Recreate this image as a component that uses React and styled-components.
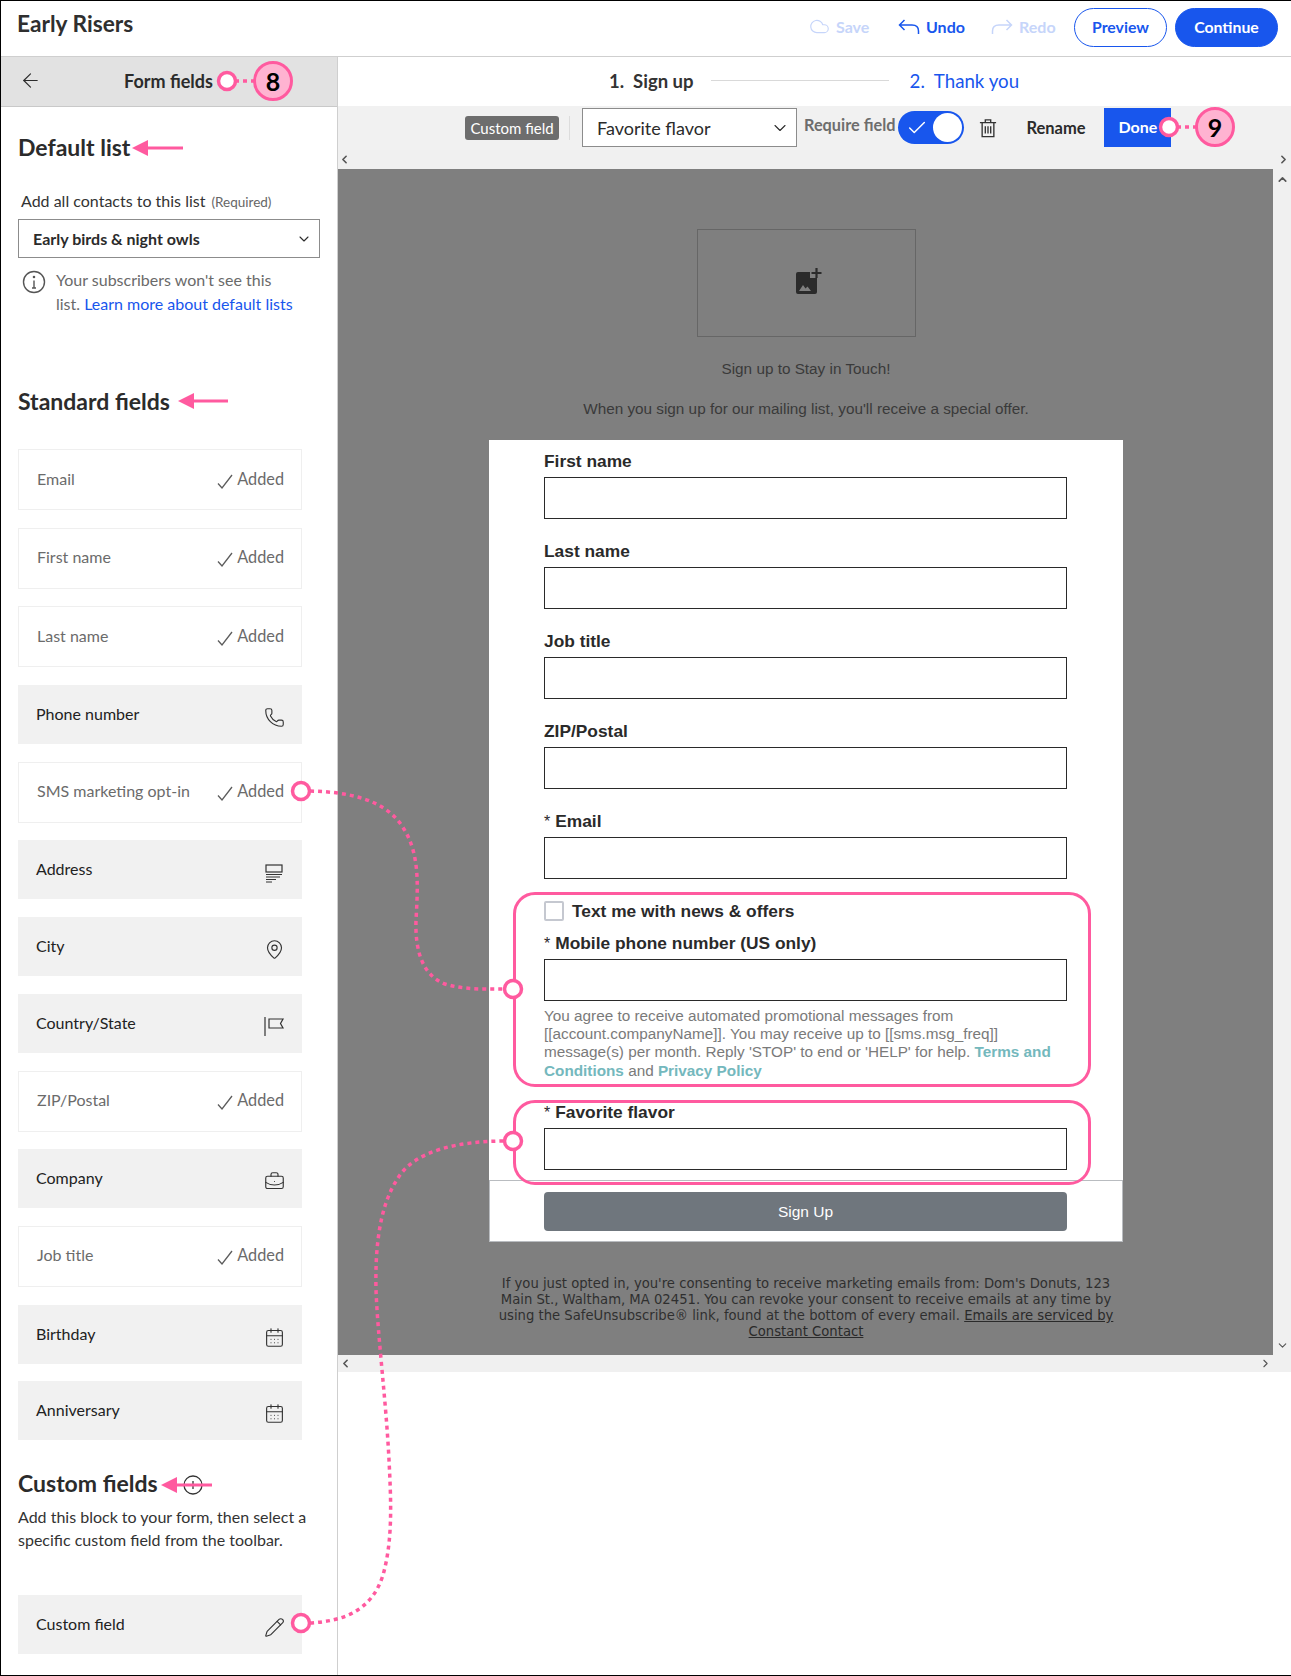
import styled, { createGlobalStyle } from "styled-components";
import { Phone, MapPin, BriefcaseBusiness, CalendarDays, Pencil, ChevronDown, ChevronLeft, ChevronRight, ChevronUp, Check, Cloud, ArrowLeft } from "lucide-react";

const BLUE = "#1856ed";
const PINK = "#ff5a9f";
const UI_FONT = `Lato, "Noto Sans", sans-serif`;
const FORM_FONT = `"Liberation Sans", Arial, sans-serif`;

const Global = createGlobalStyle`
  html, body { margin: 0; padding: 0; background: #fff; }
  * { box-sizing: border-box; }
`;

const Page = styled.div`
  position: relative;
  width: 1291px;
  height: 1676px;
  border: 1px solid #000;
  border-right-width: 0;
  background: #fff;
  font-family: ${UI_FONT};
  color: #2b2b2b;
  overflow: hidden;
`;

const Header = styled.header`
  height: 56px;
  border-bottom: 1px solid #cfcfcf;
  display: flex;
  align-items: center;
  padding: 0 13px 2px 16px;
`;

const Title = styled.h1`
  margin: 0 auto 8px 0;
  font-size: 22.7px;
  font-weight: 700;
  color: #2f2f2f;
`;

const HeaderAction = styled.span`
  display: flex;
  align-items: center;
  gap: 6px;
  width: ${(p) => p.$w}px;
  margin-top: -2px;
  font-size: 16px;
  font-weight: 700;
  color: ${(p) => (p.$off ? "#c6d5fa" : BLUE)};
`;

const PillButton = styled.button`
  height: 39px;
  width: ${(p) => p.$w}px;
  margin-left: ${(p) => p.$ml}px;
  padding: 0 0 2px;
  border-radius: 20px;
  border: 1px solid ${BLUE};
  background: ${(p) => (p.$solid ? BLUE : "#fff")};
  color: ${(p) => (p.$solid ? "#fff" : BLUE)};
  font: 700 15.8px ${UI_FONT};
`;

const Body = styled.div`
  display: flex;
  height: 1619px;
`;

const Sidebar = styled.aside`
  width: 337px;
  flex: none;
  border-right: 1px solid #cfcfcf;
`;

const SideHead = styled.div`
  height: 50px;
  background: #e2e2e2;
  border-bottom: 1px solid #c9c9c9;
  display: flex;
  align-items: center;
  padding: 0 0 2px 18px;
  font-size: 18px;
  font-weight: 700;
  color: #2b2b2b;
`;

const SideTitle = styled.span`
  margin-left: 82px;
`;

const SideBody = styled.div`
  padding: 28px 17px 0 17px;
`;

const Heading = styled.h2`
  margin: ${(p) => p.$mt || 0}px 0 0 0;
  padding-bottom: 3px;
  font-size: 23px;
  line-height: 25px;
  font-weight: 700;
  color: #2b2b2b;
`;

const ListLabel = styled.div`
  margin: 28px 0 0 3px;
  font-size: 16px;
  line-height: 20px;
  color: #333;
  small {
    margin-left: 6px;
    font-size: 13.5px;
    color: #666;
  }
`;

const ListSelect = styled.div`
  margin-top: 7px;
  width: 302px;
  height: 39px;
  border: 1px solid #8c8c8c;
  display: flex;
  align-items: center;
  justify-content: space-between;
  padding: 0 7px 0 14px;
  font-size: 16px;
  font-weight: 700;
  color: #2b2b2b;
`;

const Hint = styled.div`
  display: flex;
  gap: 10px;
  margin: 10px 0 0 4px;
  font-size: 16px;
  line-height: 24px;
  color: #6a6a6a;
  svg {
    flex: none;
    margin-top: 2px;
  }
  span {
    width: 240px;
  }
  a {
    color: ${BLUE};
  }
`;

const FieldList = styled.div`
  margin-top: ${(p) => p.$mt}px;
  width: 284px;
  display: flex;
  flex-direction: column;
  gap: 17.7px;
`;

const FieldRow = styled.div`
  height: ${(p) => (p.$added ? 61 : 59)}px;
  display: flex;
  justify-content: space-between;
  align-items: ${(p) => (p.$added ? "center" : "flex-start")};
  padding: ${(p) => (p.$added ? "0 17px 2px 18px" : "19px 17px 0 18px")};
  background: ${(p) => (p.$added ? "#fff" : "#f1f1f1")};
  border: ${(p) => (p.$added ? "1px solid #efefef" : "0")};
  color: ${(p) => (p.$added ? "#6b6b6b" : "#222")};
  font-size: 16px;
  line-height: 20px;
  svg {
    margin-top: ${(p) => (p.$added ? 0 : 3)}px;
  }
`;

const AddedMark = styled.span`
  display: flex;
  align-items: center;
  gap: 4px;
  font-size: 16.3px;
  svg {
    margin-top: 5px;
  }
`;

const CustomText = styled.p`
  margin: 6px 0 0 0;
  font-size: 16px;
  line-height: 23px;
  color: #333;
  width: 302px;
`;

const Main = styled.main`
  flex: 1;
  min-width: 0;
`;

const Steps = styled.div`
  height: 49px;
  display: flex;
  align-items: center;
  padding: 0 0 2px 271px;
  font-size: 18.7px;
`;

const StepCurrent = styled.span`
  font-size: 18.5px;
  font-weight: 700;
  color: #333;
`;

const StepLine = styled.span`
  width: 178px;
  height: 1px;
  margin: 0 21px 0 17px;
  background: #d9d9d9;
`;

const StepNext = styled.span`
  color: ${BLUE};
`;

const Toolbar = styled.div`
  height: 44px;
  background: #f1f1f1;
  display: flex;
  align-items: center;
  padding: 0 0 1px 127px;
`;

const TypeTag = styled.span`
  width: 94px;
  height: 24px;
  border-radius: 3px;
  background: #6d6d6d;
  color: #fff;
  font-size: 15px;
  line-height: 24px;
  text-align: center;
`;

const ToolDivider = styled.span`
  width: 1px;
  height: 24px;
  margin: 0 12px 0 10px;
  background: #dcdcdc;
`;

const FieldPicker = styled.div`
  width: 215px;
  height: 39px;
  background: #fff;
  border: 1px solid #8c8c8c;
  display: flex;
  align-items: center;
  justify-content: space-between;
  padding: 0 6px 0 14px;
  font-size: 18px;
  color: #2b2b2b;
`;

const RequireLabel = styled.span`
  margin: -6px 3px 0 7px;
  font-size: 16.3px;
  font-weight: 700;
  color: #6d6d6d;
  white-space: nowrap;
`;

const Toggle = styled.span`
  width: 66px;
  height: 33px;
  border-radius: 17px;
  background: ${BLUE};
  display: flex;
  align-items: center;
  justify-content: space-between;
  padding: 0 2px 0 8px;
`;

const ToggleKnob = styled.span`
  width: 29px;
  height: 29px;
  border-radius: 50%;
  background: #fff;
`;

const TrashSlot = styled.span`
  display: flex;
  margin: 0 29px 0 15px;
`;

const RenameButton = styled.span`
  width: 78px;
  font-size: 16.5px;
  font-weight: 700;
  color: #2b2b2b;
`;

const DoneButton = styled.span`
  width: 67px;
  height: 39px;
  background: ${BLUE};
  color: #fff;
  font-size: 16px;
  font-weight: 700;
  line-height: 37px;
  padding-left: 14px;
`;

const HScroll = styled.div`
  height: ${(p) => p.$h}px;
  background: #f0f0f0;
  display: flex;
  align-items: center;
  justify-content: space-between;
  padding: ${(p) => p.$pad};
  svg {
    color: #555;
  }
`;

const CanvasRow = styled.div`
  display: flex;
  height: 1186px;
`;

const Canvas = styled.div`
  width: 935px;
  background: #7f7f7f;
  display: flex;
  flex-direction: column;
  align-items: center;
  padding: 60px 0 0 1px;
  font-family: ${FORM_FONT};
`;

const VScroll = styled.div`
  flex: 1;
  background: #f0f0f0;
  display: flex;
  flex-direction: column;
  align-items: center;
  justify-content: space-between;
  padding: 4px 0 3px;
  svg {
    color: #555;
  }
`;

const LogoSlot = styled.div`
  width: 219px;
  height: 108px;
  border: 1px solid #666;
  display: flex;
  align-items: center;
  justify-content: center;
  svg {
    margin: 0 0 4px 5px;
  }
`;

const IntroText = styled.p`
  margin: ${(p) => p.$mt}px 0 0;
  font-size: 15.3px;
  line-height: 20px;
  color: #3a3a3a;
`;

const FormCard = styled.div`
  margin-top: 21px;
  width: 634px;
  background: #fff;
  padding: 8px 56px 0 55px;
`;

const FieldLabel = styled.label`
  display: block;
  height: ${(p) => p.$lh ?? 26}px;
  margin-bottom: ${(p) => p.$mb ?? 3}px;
  font-size: 17.35px;
  line-height: ${(p) => p.$lh ?? 26}px;
  font-weight: 700;
  color: #2a2a2a;
  sup {
    font-size: 16px;
    font-weight: 400;
    line-height: 0;
    vertical-align: 0;
    margin-right: 5px;
  }
`;

const TextBox = styled.div`
  height: 42px;
  border: 1px solid #2a2a2a;
  background: #fff;
`;

const Field = styled.div`
  margin-bottom: ${(p) => p.$mb ?? 19}px;
`;

const Callout = styled.div`
  margin: ${(p) => p.$mt || 0}px -24px 0 -31px;
  padding: ${(p) => p.$pt}px 21px 0 28px;
  height: ${(p) => p.$h}px;
  border: 3px solid ${PINK};
  border-radius: 22px;
  position: relative;
  z-index: 1;
`;

const OptIn = styled.div`
  display: flex;
  align-items: center;
  gap: 8px;
  height: 20px;
  margin-bottom: 9px;
  font-size: 17.35px;
  font-weight: 700;
  color: #2a2a2a;
`;

const CheckBox = styled.span`
  width: 20px;
  height: 20px;
  border: 2px solid #c5c8d0;
  border-radius: 2px;
`;

const Legal = styled.p`
  margin: 6px 0 0;
  font-size: 15.3px;
  line-height: 18.2px;
  color: #7a7a7a;
  b {
    color: #74b8bd;
  }
`;

const SubmitRow = styled.div`
  width: 634px;
  height: 62px;
  background: #fff;
  border: 1px solid #b9bcc0;
  padding: 11px 55px 0 54px;
  margin-top: -5px;
`;

const SubmitButton = styled.div`
  height: 39px;
  border-radius: 4px;
  background: #6f767d;
  color: #fff;
  font-size: 15.5px;
  line-height: 39px;
  text-align: center;
`;

const FooterNote = styled.p`
  width: 624px;
  margin: 34px 0 0;
  font-family: "DejaVu Sans", Verdana, sans-serif;
  font-size: 13.2px;
  line-height: 16px;
  text-align: center;
  color: #2f2f2f;
  u {
    color: #2a2a2a;
  }
`;

const Overlay = styled.svg`
  position: absolute;
  left: -1px;
  top: -1px;
  z-index: 5;
  pointer-events: none;
`;

const Badge = styled.span`
  position: absolute;
  z-index: 6;
  left: ${(p) => p.$x - 21}px;
  top: ${(p) => p.$y - 21}px;
  width: 40px;
  height: 40px;
  border-radius: 50%;
  background: #ffb3d1;
  border: 3px solid ${PINK};
  color: #000;
  font: 700 25px/34px ${UI_FONT};
  text-align: center;
`;

const IconAddress = () => (
  <svg width="22" height="22" viewBox="0 0 22 22" fill="none" stroke="#333" strokeWidth="1.2">
    <rect x="3" y="3" width="16" height="7" />
    <path d="M3 12.5h16M3 15h14M3 17.5h10M3 20h6" />
  </svg>
);

const IconFlag = () => (
  <svg width="22" height="22" viewBox="0 0 22 22" fill="none" stroke="#333" strokeWidth="1.2">
    <path d="M2 1v19" />
    <path d="M6 3h14l-2.5 4.5L20 12H6z" />
  </svg>
);

const IconInfo = ({ size = 24 }) => (
  <svg width={size} height={size} viewBox="0 0 24 24" fill="none" stroke="#555" strokeWidth="1.4">
    <circle cx="12" cy="12" r="10.5" />
    <path d="M12 10.5V18M10 18h4" />
    <circle cx="12" cy="7" r="0.6" fill="#555" />
  </svg>
);

const IconTrash = () => (
  <svg width="18" height="20" viewBox="0 0 20 22" fill="none" stroke="#333" strokeWidth="1.5">
    <path d="M1 5h18M7 4.5V2h6v2.5M3.5 5v15.5h13V5" />
    <path d="M7 9v8M10 9v8M13 9v8" />
  </svg>
);

const IconTick = () => (
  <svg width="16" height="15" viewBox="0 0 16 15" fill="none" stroke="#5c5c5c" strokeWidth="1.3">
    <path d="M1 9.5 5 14 15 1" />
  </svg>
);

const IconUndo = ({ color }) => (
  <svg width="22" height="18" viewBox="0 0 22 18" fill="none" stroke={color} strokeWidth="1.5">
    <path d="M6.5 2 1.5 7l5 5M1.5 7H14c4 0 6.5 2 6.5 6v3" />
  </svg>
);

const IconRedo = ({ color }) => (
  <svg width="22" height="18" viewBox="0 0 22 18" fill="none" stroke={color} strokeWidth="1.5">
    <path d="m15.5 2 5 5-5 5M20.5 7H8c-4 0-6.5 2-6.5 6v3" />
  </svg>
);

const IconAddImage = () => (
  <svg width="26" height="26" viewBox="0 0 26 26">
    <path d="M0 6a2 2 0 0 1 2-2h12v6h7v14a2 2 0 0 1-2 2H2a2 2 0 0 1-2-2z" fill="#2b2b2b" />
    <path d="M20.5 0v10M15.5 5h10" stroke="#2b2b2b" strokeWidth="2.2" />
    <path d="m3 23 4-6 2.5 3.5 2-2 3.5 4.5z" fill="#7f7f7f" />
  </svg>
);

const Added = () => (
  <AddedMark>
    <IconTick />
    Added
  </AddedMark>
);

const iconProps = { size: 21, strokeWidth: 1.3, color: "#333" };

const STANDARD_FIELDS = [
  { name: "Email", added: true },
  { name: "First name", added: true },
  { name: "Last name", added: true },
  { name: "Phone number", icon: <Phone {...iconProps} /> },
  { name: "SMS marketing opt-in", added: true },
  { name: "Address", icon: <IconAddress /> },
  { name: "City", icon: <MapPin {...iconProps} /> },
  { name: "Country/State", icon: <IconFlag /> },
  { name: "ZIP/Postal", added: true },
  { name: "Company", icon: <BriefcaseBusiness {...iconProps} /> },
  { name: "Job title", added: true },
  { name: "Birthday", icon: <CalendarDays {...iconProps} /> },
  { name: "Anniversary", icon: <CalendarDays {...iconProps} /> },
];

const FORM_FIELDS = ["First name", "Last name", "Job title", "ZIP/Postal"];

const SideField = ({ name, icon, added }) => (
  <FieldRow $added={added}>
    <span>{name}</span>
    {added ? <Added /> : icon}
  </FieldRow>
);

const Arrow = ({ x, y, to }) => (
  <g fill={PINK} stroke={PINK}>
    <path d={`M${x + 14} ${y}H${to}`} strokeWidth="3" />
    <path d={`M${x} ${y}l16-8v16z`} stroke="none" />
  </g>
);

const Dot = ({ x, y }) => (
  <ellipse cx={x} cy={y} rx="8.5" ry="8.5" fill="#fff" stroke={PINK} strokeWidth="3.5" />
);

const Annotations = () => (
  <Overlay width="1291" height="1676" viewBox="0 0 1291 1676" fill="none">
    <g stroke={PINK} strokeWidth="3.5" strokeDasharray="4 4">
      <path d="M235 81H255" />
      <path d="M1177 127H1197" />
      <path d="M310 791C350 792 385 800 402 826C420 852 418 885 416 920C415 950 422 975 445 984C465 990 485 989 505 989" />
      <path d="M310 1623C345 1621 372 1610 383 1575C393 1540 391 1500 389 1460C386 1400 378 1340 376 1290C375 1245 380 1205 398 1178C415 1150 460 1141 505 1141" />
    </g>
    <Arrow x={132} y={148} to={183} />
    <Arrow x={178} y={401} to={228} />
    <circle cx="193" cy="1485" r="9" stroke="#333" strokeWidth="1.3" />
    <path d="M193 1481v8" stroke="#333" strokeWidth="1.3" />
    <Arrow x={161} y={1485} to={212} />
    <Dot x={227} y={81} />
    <Dot x={1169} y={127} />
    <Dot x={301} y={791} />
    <Dot x={301} y={1623} />
    <Dot x={513} y={989} />
    <Dot x={513} y={1141} />
  </Overlay>
);

export default function App() {
  return (
    <>
      <Global />
      <Page>
        <Header>
          <Title>Early Risers</Title>
          <HeaderAction $off $w={89}>
            <Cloud size={21} strokeWidth={1.3} />
            Save
          </HeaderAction>
          <HeaderAction $w={93}>
            <IconUndo color={BLUE} />
            Undo
          </HeaderAction>
          <HeaderAction $off $w={83}>
            <IconRedo color="#c6d5fa" />
            Redo
          </HeaderAction>
          <PillButton $w={93}>Preview</PillButton>
          <PillButton $solid $w={103} $ml={8}>
            Continue
          </PillButton>
        </Header>
        <Body>
          <Sidebar>
            <SideHead>
              <ArrowLeft size={23} strokeWidth={1.2} />
              <SideTitle>Form fields</SideTitle>
            </SideHead>
            <SideBody>
              <Heading>Default list</Heading>
              <ListLabel>
                Add all contacts to this list<small>(Required)</small>
              </ListLabel>
              <ListSelect>
                Early birds &amp; night owls
                <ChevronDown size={16} strokeWidth={1.6} />
              </ListSelect>
              <Hint>
                <IconInfo />
                <span>
                  Your subscribers won't see this list. <a>Learn more about default lists</a>
                </span>
              </Hint>
              <Heading $mt={72.5}>Standard fields</Heading>
              <FieldList $mt={32.5}>
                {STANDARD_FIELDS.map((f) => (
                  <SideField key={f.name} {...f} />
                ))}
              </FieldList>
              <Heading $mt={31}>Custom fields</Heading>
              <CustomText>Add this block to your form, then select a specific custom field from the toolbar.</CustomText>
              <FieldList $mt={44}>
                <SideField name="Custom field" icon={<Pencil {...iconProps} />} />
              </FieldList>
            </SideBody>
          </Sidebar>
          <Main>
            <Steps>
              <StepCurrent>1.&nbsp; Sign up</StepCurrent>
              <StepLine />
              <StepNext>2.&nbsp; Thank you</StepNext>
            </Steps>
            <Toolbar>
              <TypeTag>Custom field</TypeTag>
              <ToolDivider />
              <FieldPicker>
                Favorite flavor
                <ChevronDown size={20} strokeWidth={1.3} />
              </FieldPicker>
              <RequireLabel>Require field</RequireLabel>
              <Toggle>
                <Check size={22} color="#fff" strokeWidth={1.6} />
                <ToggleKnob />
              </Toggle>
              <TrashSlot>
                <IconTrash />
              </TrashSlot>
              <RenameButton>Rename</RenameButton>
              <DoneButton>Done</DoneButton>
            </Toolbar>
            <HScroll $h={19} $pad="0 1px 0 0">
              <ChevronLeft size={13} strokeWidth={3} />
              <ChevronRight size={13} strokeWidth={3} />
            </HScroll>
            <CanvasRow>
              <Canvas>
                <LogoSlot>
                  <IconAddImage />
                </LogoSlot>
                <IntroText $mt={22}>Sign up to Stay in Touch!</IntroText>
                <IntroText $mt={20}>When you sign up for our mailing list, you'll receive a special offer.</IntroText>
                <FormCard>
                  {FORM_FIELDS.map((name) => (
                    <Field key={name}>
                      <FieldLabel>{name}</FieldLabel>
                      <TextBox />
                    </Field>
                  ))}
                  <Field $mb={13}>
                    <FieldLabel>
                      <sup>*</sup>Email
                    </FieldLabel>
                    <TextBox />
                  </Field>
                  <Callout $h={195} $pt={6}>
                    <OptIn>
                      <CheckBox />
                      Text me with news &amp; offers
                    </OptIn>
                    <FieldLabel>
                      <sup>*</sup>Mobile phone number (US only)
                    </FieldLabel>
                    <TextBox />
                    <Legal>
                      You agree to receive automated promotional messages from [[account.companyName]]. You may receive up to
                      [[sms.msg_freq]] message(s) per month. Reply 'STOP' to end or 'HELP' for help. <b>Terms and Conditions</b>{" "}
                      and <b>Privacy Policy</b>
                    </Legal>
                  </Callout>
                  <Callout $h={85} $pt={0} $mt={13}>
                    <FieldLabel $lh={18} $mb={7}>
                      <sup>*</sup>Favorite flavor
                    </FieldLabel>
                    <TextBox />
                  </Callout>
                </FormCard>
                <SubmitRow>
                  <SubmitButton>Sign Up</SubmitButton>
                </SubmitRow>
                <FooterNote>
                  If you just opted in, you're consenting to receive marketing emails from: Dom's Donuts, 123 Main St., Waltham, MA
                  02451. You can revoke your consent to receive emails at any time by using the SafeUnsubscribe® link, found at the
                  bottom of every email. <u>Emails are serviced by Constant Contact</u>
                </FooterNote>
              </Canvas>
              <VScroll>
                <ChevronUp size={13} strokeWidth={3} />
                <ChevronDown size={13} strokeWidth={2} />
              </VScroll>
            </CanvasRow>
            <HScroll $h={17} $pad="0 19px 0 1px">
              <ChevronLeft size={13} strokeWidth={3} />
              <ChevronRight size={13} strokeWidth={2} />
            </HScroll>
          </Main>
        </Body>
        <Annotations />
        <Badge $x={273} $y={81}>8</Badge>
        <Badge $x={1215} $y={127}>9</Badge>
      </Page>
    </>
  );
}
